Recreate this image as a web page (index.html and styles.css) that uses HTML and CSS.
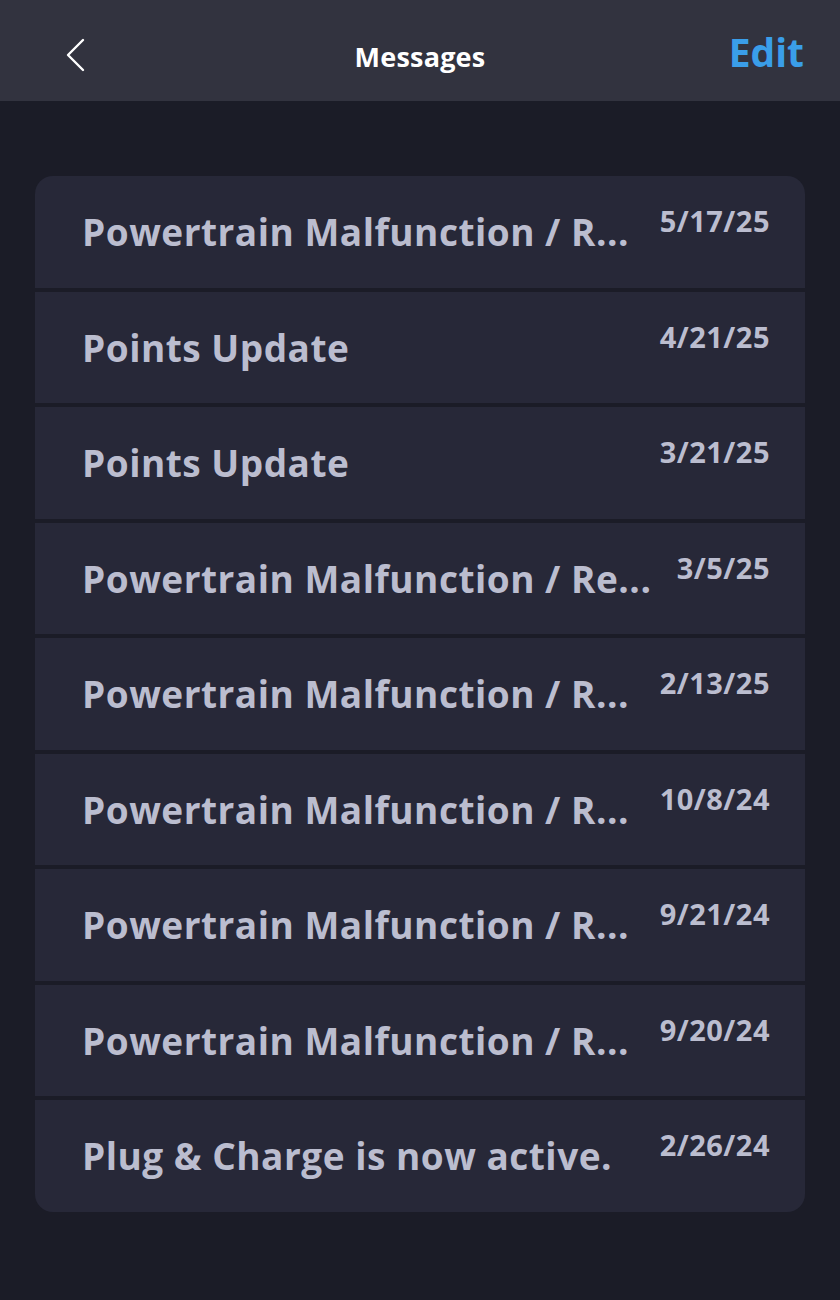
FILE: index.html
```html
<!DOCTYPE html>
<html>
<head>
<meta charset="utf-8">
<link rel="stylesheet" href="styles.css">
</head>
<body>
<header class="topbar">
  <span class="back">
    <svg width="22" height="34" viewBox="0 0 22 34"><path d="M19 2 L4 17 L19 32" fill="none" stroke="#ffffff" stroke-width="2.4" stroke-linecap="round" stroke-linejoin="round"/></svg>
  </span>
  <h1 class="title">Messages</h1>
  <span class="edit">Edit</span>
</header>
<main class="content">
  <ul class="list">
    <li class="row"><span class="subject">Powertrain Malfunction / R...</span><span class="date">5/17/25</span></li>
    <li class="row"><span class="subject">Points Update</span><span class="date">4/21/25</span></li>
    <li class="row"><span class="subject">Points Update</span><span class="date">3/21/25</span></li>
    <li class="row"><span class="subject">Powertrain Malfunction / Re...</span><span class="date">3/5/25</span></li>
    <li class="row"><span class="subject">Powertrain Malfunction / R...</span><span class="date">2/13/25</span></li>
    <li class="row"><span class="subject">Powertrain Malfunction / R...</span><span class="date">10/8/24</span></li>
    <li class="row"><span class="subject">Powertrain Malfunction / R...</span><span class="date">9/21/24</span></li>
    <li class="row"><span class="subject">Powertrain Malfunction / R...</span><span class="date">9/20/24</span></li>
    <li class="row"><span class="subject">Plug &amp; Charge is now active.</span><span class="date">2/26/24</span></li>
  </ul>
</main>
</body>
</html>
```
FILE: styles.css
```css
html, body {
  margin: 0;
  padding: 0;
}
body {
  background: #1b1c27;
  font-family: "Open Sans", Lato, sans-serif;
  width: 840px;
  min-height: 1300px;
}
.topbar {
  height: 101px;
  background: #32333f;
  display: flex;
  align-items: center;
  justify-content: space-between;
  padding: 0 36px 0 64px;
  box-sizing: border-box;
  position: relative;
}
.back {
  display: flex;
  align-items: center;
  margin-top: 8px;
}
.title {
  margin: 0;
  position: absolute;
  left: 0;
  right: 0;
  text-align: center;
  top: 38px;
  font-size: 27px;
  font-weight: 700;
  letter-spacing: 0.2px;
  color: #ffffff;
  line-height: 38px;
  pointer-events: none;
}
.edit {
  color: #3a9ee9;
  font-size: 39px;
  font-weight: 700;
  margin-top: 2px;
}
.content {
  padding: 75px 35px 0 35px;
}
.list {
  list-style: none;
  margin: 0;
  padding: 0;
  display: flex;
  flex-direction: column;
  gap: 4px;
  border-radius: 18px;
  overflow: hidden;
}
.row {
  height: 111.5px;
  background: #272838;
  display: flex;
  align-items: center;
  justify-content: space-between;
  padding: 0 35px 0 47px;
  box-sizing: border-box;
}
.subject {
  color: #bbbdcf;
  font-size: 37px;
  font-weight: 700;
  letter-spacing: 0.5px;
  white-space: nowrap;
}
.date {
  align-self: flex-start;
  margin-top: 29px;
  color: #bbbdcf;
  font-size: 29px;
  font-weight: 700;
  letter-spacing: 0.5px;
  line-height: 32px;
  white-space: nowrap;
}
```
